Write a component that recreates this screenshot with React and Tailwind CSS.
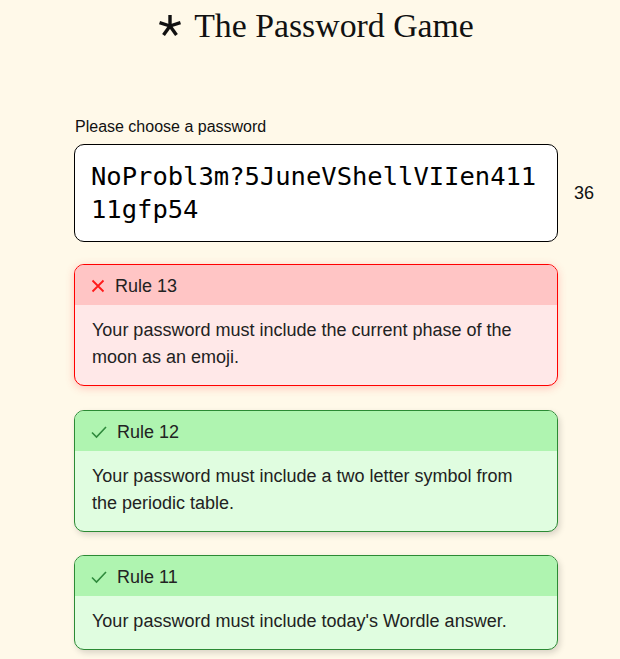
function Asterisk() {
  const arms = [0, 72, 144, 216, 288];
  return (
    <svg width="24" height="24" viewBox="-12 -12 24 24" className="shrink-0">
      {arms.map((a) => {
        const r = (a * Math.PI) / 180;
        return (
          <line
            key={a}
            x1="0"
            y1="0"
            x2={(Math.sin(r) * 11).toFixed(2)}
            y2={(-Math.cos(r) * 11).toFixed(2)}
            stroke="#111"
            strokeWidth="3.4"
          />
        );
      })}
    </svg>
  );
}

function CrossIcon() {
  return (
    <svg width="14" height="14" viewBox="0 0 14 14" className="shrink-0">
      <path d="M1.5 1.5 L12.5 12.5 M12.5 1.5 L1.5 12.5" stroke="#ff1a1a" strokeWidth="1.8" fill="none" />
    </svg>
  );
}

function CheckIcon() {
  return (
    <svg width="16" height="14" viewBox="0 0 16 14" className="shrink-0">
      <path d="M1 7.5 L5.5 12 L15 2" stroke="#2f8a3c" strokeWidth="1.6" fill="none" />
    </svg>
  );
}

function Rule({ num, text, ok }) {
  return (
    <div
      className={
        ok
          ? 'overflow-hidden rounded-[10px] border border-[#2b8a34] bg-[#e0fde0] shadow-[2px_3px_6px_rgba(0,0,0,0.15)]'
          : 'overflow-hidden rounded-[10px] border border-[#ff0000] bg-[#ffe8e8] shadow-[0_2px_8px_rgba(255,80,80,0.3)]'
      }
    >
      <div
        className={
          ok
            ? 'flex items-center gap-[10px] bg-[#aff4b0] pt-[9px] pb-[7px] pl-4 leading-6 text-[18px] text-[#222]'
            : 'flex items-center gap-[10px] bg-[#ffc5c5] pt-[9px] pb-[7px] pl-4 leading-6 text-[18px] text-[#222]'
        }
      >
        {ok ? <CheckIcon /> : <CrossIcon />}
        <span>Rule {num}</span>
      </div>
      <p className="px-[17px] pt-[12px] pb-[14px] text-[18px] leading-[27px] text-[#222]">{text}</p>
    </div>
  );
}

export default function App() {
  return (
    <div className="min-h-[659px] bg-[#fff9e9] font-['Liberation_Sans',Arial,sans-serif]">
      <h1 className="flex items-center justify-center gap-[12px] pt-[7px] pl-[12px] font-['Liberation_Serif',serif] text-[33.8px] leading-[38px] text-[#111]">
        <Asterisk />
        <span>The Password Game</span>
      </h1>
      <div className="mt-[73px] pl-[74px]">
        <p className="pl-[1px] text-[16px] leading-[18px] text-[#111]">Please choose a password</p>
        <div className="mt-[8px] flex items-center">
          <div className="w-[484px] break-all rounded-[10px] border border-black bg-white px-4 py-[15px] font-['DejaVu_Sans_Mono',monospace] text-[25.5px] leading-[33px] text-black">
            NoProbl3m?5JuneVShellVIIen41111gfp54
          </div>
          <span className="ml-4 text-[18px] text-[#111]">36</span>
        </div>
        <div className="mt-[22px] flex w-[484px] flex-col gap-[23.5px]">
          <Rule num={13} text="Your password must include the current phase of the moon as an emoji." />
          <Rule num={12} ok text="Your password must include a two letter symbol from the periodic table." />
          <Rule num={11} ok text="Your password must include today's Wordle answer." />
        </div>
      </div>
    </div>
  );
}
